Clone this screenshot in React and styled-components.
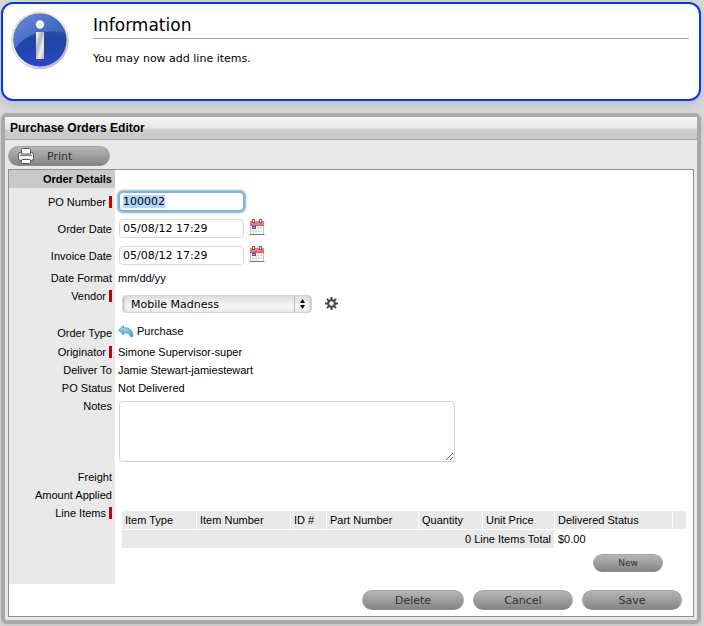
import React, { useEffect, useRef, useState } from "react"
import styled, { createGlobalStyle } from "styled-components"

const GlobalStyle = createGlobalStyle`
  * {
    box-sizing: border-box;
  }
  body {
    margin: 0;
    background: #d9d9d9;
    color: #000;
    font-family: "Liberation Sans", Arial, sans-serif;
    font-size: 11px;
    line-height: 18px;
  }
`

const Page = styled.div`
  display: flex;
  flex-direction: column;
  gap: 12px;
  padding: 2px 3px 2px 1px;
`

const Message = styled.section`
  display: flex;
  gap: 24px;
  min-height: 99px;
  padding: 7px 10px 7px 8px;
  background: #fff;
  border: 2px solid #0037ff;
  border-radius: 12px;
  box-shadow: 0 4px 12px rgba(0, 0, 0, 0.12);
  font-family: "DejaVu Sans", Verdana, sans-serif;
`

const MessageText = styled.div`
  flex: 1;
`

const MessageTitle = styled.h1`
  margin: 0 0 11px;
  padding-top: 1px;
  border-bottom: 1px solid #a0a0a0;
  font-size: 17px;
  font-weight: normal;
  line-height: 26px;
`

const MessageBody = styled.p`
  margin: 0;
  font-size: 11px;
`

const Window = styled.section`
  padding-bottom: 3px;
  background: #e9e9e9;
  border: 4px solid #a8aaa9;
  border-radius: 6px;
  box-shadow: 0 4px 10px rgba(0, 0, 0, 0.1);
`

const WindowTitle = styled.h2`
  margin: 0;
  padding: 0 5px;
  border-bottom: 1px solid #a5a5a5;
  background: linear-gradient(#f6f6f6, #e6e6e6 50%, #cdcdcd 60%, #c9c9c9);
  font-size: 12px;
  line-height: 22px;
`

const Toolbar = styled.div`
  padding: 6px 3px 3px;
`

const PillButton = styled.button`
  display: flex;
  align-items: center;
  justify-content: center;
  width: ${(props) => (props.$small ? "70px" : props.$wide ? "102px" : "100px")};
  height: ${(props) => (props.$small ? "18px" : "20px")};
  padding: 0;
  border: 1px solid #a3a3a3;
  border-bottom-color: #8c8c8c;
  border-radius: 10px;
  background: linear-gradient(#b6b6b6, #858585);
  color: #333;
  font-family: "DejaVu Sans", Verdana, sans-serif;
  font-size: ${(props) => (props.$small ? "9px" : "11px")};
`

const PrintButton = styled(PillButton)`
  justify-content: flex-start;
  gap: 12px;
  padding-left: 8px;
`

const Panel = styled.form`
  margin: 0 3px;
  border: 1px solid #8f8f8f;
  background: #fff;
`

const Row = styled.div`
  display: grid;
  grid-template-columns: 106px minmax(0, 1fr);
  min-height: ${(props) => (props.$tall ? "27px" : "18px")};
`

const Label = styled.label`
  display: flex;
  justify-content: flex-end;
  align-items: ${(props) => (props.$top ? "flex-start" : "center")};
  padding-right: 3px;
  background: #e9e9e9;
`

const Heading = styled.h3`
  margin: 0;
  padding-right: 3px;
  background: #c9c9c9;
  font-size: 11px;
  text-align: right;
`

const Required = styled.span`
  width: 3px;
  height: 12px;
  margin: 3px 0 3px 3px;
  background: #c80000;
`

const Value = styled.div`
  display: flex;
  align-items: center;
  gap: ${(props) => props.$gap || 0}px;
  padding: ${(props) => props.$pad || "0 3px"};
`

const TextInput = styled.input`
  width: 125px;
  height: 19px;
  padding: 0 3px;
  border: 1px solid #d9d9d9;
  border-radius: 4px;
  outline: none;
  background: #fff;
  color: #000;
  font-family: "DejaVu Sans", Verdana, sans-serif;
  font-size: 11px;
  &:focus {
    border-color: #7fb0dc;
    box-shadow: 0 0 0 1px #84b4e0, 0 0 2px 2px #84b4e0;
  }
  &::selection {
    background: #b4d5fe;
    color: #000;
  }
`

const IconButton = styled.button`
  display: flex;
  padding: 0 0 2px;
  border: 0;
  background: none;
`

const SelectBox = styled.div`
  display: grid;
  width: 190px;
  height: 18px;
  align-items: center;
  background: linear-gradient(#dedede, #f5f5f5 60%, #ececec);
  border: 1px solid #d4d4d4;
  border-radius: 4px;
  box-shadow: inset 3px 0 3px -2px #bbb, inset -3px 0 3px -2px #bbb;
`

const Select = styled.select`
  grid-area: 1 / 1;
  width: 100%;
  padding: 0 20px 0 8px;
  border: 0;
  outline: none;
  appearance: none;
  background: none;
  color: #000;
  font-family: "DejaVu Sans", "Lucida Grande", sans-serif;
  font-size: 11px;
`

const SelectArrows = styled.svg`
  grid-area: 1 / 1;
  justify-self: end;
  pointer-events: none;
`

const Notes = styled.textarea`
  display: block;
  width: 336px;
  height: 61px;
  border: 1px solid #d4d4d4;
  border-radius: 4px;
  outline: none;
  font-family: "DejaVu Sans", Verdana, sans-serif;
  font-size: 11px;
`

const LineItems = styled.div`
  padding: 6px 6px 12px;
`

const Table = styled.table`
  width: 100%;
  border-collapse: separate;
  border-spacing: 1px;
  table-layout: fixed;
`

const Th = styled.th`
  padding: 0 3px;
  background: #e9e9e9;
  font-weight: normal;
  text-align: left;
  white-space: nowrap;
`

const Td = styled.td`
  padding: 0 3px;
  background: ${(props) => (props.$total ? "#e9e9e9" : "none")};
  text-align: ${(props) => (props.$total ? "right" : "left")};
`

const NewRow = styled.div`
  display: flex;
  justify-content: flex-end;
  padding: 5px 24px 0 0;
`

const Footer = styled.div`
  display: flex;
  justify-content: flex-end;
  gap: 9px;
  padding: 6px 11px;
`

function InfoIcon() {
  return (
    <svg width="58" height="60" viewBox="0 0 58 60">
      <defs>
        <linearGradient id="rim" x1="0" y1="0" x2="1" y2="1">
          <stop offset="0" stopColor="#d0d0d0" />
          <stop offset="0.5" stopColor="#f2f2f2" />
          <stop offset="1" stopColor="#a4a4a4" />
        </linearGradient>
        <linearGradient id="ball" x1="0" y1="0" x2="0" y2="1">
          <stop offset="0" stopColor="#3a63c4" />
          <stop offset="0.5" stopColor="#2045a0" />
          <stop offset="1" stopColor="#2c46c8" />
        </linearGradient>
        <linearGradient id="gloss" x1="0" y1="0" x2="1" y2="1">
          <stop offset="0" stopColor="#6a8ce0" />
          <stop offset="1" stopColor="#2c50b0" />
        </linearGradient>
        <linearGradient id="stem" x1="0" y1="0" x2="1" y2="1">
          <stop offset="0" stopColor="#fff" />
          <stop offset="0.4" stopColor="#b4b4b4" />
          <stop offset="0.65" stopColor="#ededed" />
          <stop offset="1" stopColor="#b8b8b8" />
        </linearGradient>
      </defs>
      <circle cx="29" cy="29.500" r="28.500" fill="#a9a9a9" />
      <circle cx="29" cy="29" r="28.500" fill="url(#rim)" />
      <circle cx="29" cy="29" r="26.500" fill="url(#ball)" />
      <path d="M4 38 A26.500 26.500 0 1 1 54.500 22 C36 17 14 22 4 38 Z" fill="url(#gloss)" />
      <circle cx="29" cy="13.500" r="4.200" fill="#f5f5f5" />
      <rect x="25" y="21" width="8" height="27" fill="url(#stem)" />
    </svg>
  )
}

function PrinterIcon() {
  return (
    <svg width="18" height="16" viewBox="0 0 18 16">
      <rect x="1.500" y="4.500" width="15" height="8" rx="2" fill="#e8e8e8" stroke="#555" />
      <path d="M4.500 6 V1.500 Q4.500 0.500 5.500 0.500 H12.500 Q13.500 0.500 13.500 1.500 V6 Z" fill="#fff" stroke="#555" />
      <path d="M3 7.500 H15" stroke="#777" />
      <path d="M2 9 H16" stroke="#fff" />
      <rect x="4.500" y="11.500" width="9" height="4" rx="1" fill="#fff" stroke="#555" />
    </svg>
  )
}

function CalendarIcon() {
  return (
    <svg width="16" height="17" viewBox="0 0 16 17">
      <rect x="1.500" y="2.500" width="13" height="13" fill="#fff" stroke="#c4c4c4" />
      <path d="M0.500 15.500 H15.500" stroke="#8a7474" />
      <rect x="1" y="2" width="14" height="5" fill="#f47472" />
      <path d="M1 6.500 H15" stroke="#dd5550" />
      <path d="M4.500 0 V4 M11.500 0 V4" stroke="#a05050" strokeWidth="3" />
      <path d="M4.500 1 V3 M11.500 1 V3" stroke="#fff" />
      <path d="M8 9 H13 M3 12 H13" stroke="#c4dadd" strokeDasharray="2 1" strokeWidth="2" />
      <path d="M3 14 H10" stroke="#c4dadd" strokeDasharray="2 1" />
      <rect x="3.500" y="7.500" width="3" height="2" fill="#a8c0f0" stroke="#3158bd" />
    </svg>
  )
}

function GearIcon() {
  return (
    <svg width="13" height="13" viewBox="0 0 13 13">
      <path
        d="M6.500 0 V13 M0 6.500 H13 M1.900 1.900 L11.100 11.100 M11.100 1.900 L1.900 11.100"
        stroke="#444"
        strokeWidth="2"
      />
      <circle cx="6.500" cy="6.500" r="3.300" fill="#fff" stroke="#444" strokeWidth="2" />
    </svg>
  )
}

function ReplyIcon() {
  return (
    <svg width="16" height="12" viewBox="0 0 16 12">
      <defs>
        <linearGradient id="reply" x1="0" y1="0" x2="0" y2="1">
          <stop offset="0" stopColor="#b4e4f6" />
          <stop offset="1" stopColor="#3a9ad6" />
        </linearGradient>
      </defs>
      <path
        d="M0.600 5 L5.500 0.800 V2.800 C11 2.400 15.200 5 14.800 11.400 H12.500 C12 8.600 9.500 7.600 5.500 7.600 V10 Z"
        fill="url(#reply)"
        stroke="#4aa2d0"
        strokeLinejoin="round"
      />
    </svg>
  )
}

const columns = [
  { name: "Item Type", width: "74px" },
  { name: "Item Number", width: "93px" },
  { name: "ID #", width: "35px" },
  { name: "Part Number", width: "91px" },
  { name: "Quantity", width: "63px" },
  { name: "Unit Price", width: "71px" },
  { name: "Delivered Status", width: "auto" },
  { name: "", width: "13px" },
]

function DateRow({ id, label }) {
  const [date, setDate] = useState("05/08/12 17:29")

  return (
    <Row $tall>
      <Label htmlFor={id}>{label}</Label>
      <Value $gap={5} $pad="0 4px">
        <TextInput
          id={id}
          type="text"
          value={date}
          onChange={(event) => setDate(event.target.value)}
        />
        <IconButton type="button" aria-label={`Pick ${label}`}>
          <CalendarIcon />
        </IconButton>
      </Value>
    </Row>
  )
}

function App() {
  const [poNumber, setPoNumber] = useState("100002")
  const poInput = useRef(null)

  useEffect(() => {
    poInput.current.focus()
    poInput.current.select()
  }, [])

  return (
    <>
      <GlobalStyle />
      <Page>
        <Message>
          <InfoIcon />
          <MessageText>
            <MessageTitle>Information</MessageTitle>
            <MessageBody>You may now add line items.</MessageBody>
          </MessageText>
        </Message>
        <Window>
          <WindowTitle>Purchase Orders Editor</WindowTitle>
          <Toolbar>
            <PrintButton type="button" $wide>
              <PrinterIcon />
              Print
            </PrintButton>
          </Toolbar>
          <Panel onSubmit={(event) => event.preventDefault()}>
            <Row>
              <Heading>Order Details</Heading>
            </Row>
            <Row $tall>
              <Label htmlFor="po-number">
                PO Number
                <Required />
              </Label>
              <Value $pad="0 4px">
                <TextInput
                  id="po-number"
                  ref={poInput}
                  type="text"
                  value={poNumber}
                  onChange={(event) => setPoNumber(event.target.value)}
                />
              </Value>
            </Row>
            <DateRow id="order-date" label="Order Date" />
            <DateRow id="invoice-date" label="Invoice Date" />
            <Row>
              <Label as="div">Date Format</Label>
              <Value>mm/dd/yy</Value>
            </Row>
            <Row>
              <Label htmlFor="vendor" $top>
                Vendor
                <Required />
              </Label>
              <Value $gap={13} $pad="8px 7px 9px">
                <SelectBox>
                  <Select id="vendor">
                    <option>Mobile Madness</option>
                  </Select>
                  <SelectArrows width="17" height="16" viewBox="0 0 17 16">
                    <path d="M0.500 0 V16" stroke="#c0c0c0" />
                    <path d="M6 7 L8.500 3 L11 7 Z M6 9 L8.500 13 L11 9 Z" fill="#000" />
                  </SelectArrows>
                </SelectBox>
                <IconButton type="button" aria-label="Vendor settings">
                  <GearIcon />
                </IconButton>
              </Value>
            </Row>
            <Row>
              <Label as="div">Order Type</Label>
              <Value $gap={3} $pad="0 3px 3px">
                <ReplyIcon />
                Purchase
              </Value>
            </Row>
            <Row>
              <Label as="div">
                Originator
                <Required />
              </Label>
              <Value>Simone Supervisor-super</Value>
            </Row>
            <Row>
              <Label as="div">Deliver To</Label>
              <Value>Jamie Stewart-jamiestewart</Value>
            </Row>
            <Row>
              <Label as="div">PO Status</Label>
              <Value>Not Delivered</Value>
            </Row>
            <Row>
              <Label htmlFor="notes" $top>
                Notes
              </Label>
              <Value $pad="4px 4px 6px">
                <Notes id="notes" />
              </Value>
            </Row>
            <Row>
              <Label as="div">Freight</Label>
            </Row>
            <Row>
              <Label as="div">Amount Applied</Label>
            </Row>
            <Row>
              <Label as="div" $top>
                Line Items
                <Required />
              </Label>
              <LineItems>
                <Table>
                  <colgroup>
                    {columns.map((column) => (
                      <col key={column.name} style={{ width: column.width }} />
                    ))}
                  </colgroup>
                  <thead>
                    <tr>
                      {columns.map((column) => (
                        <Th key={column.name}>{column.name}</Th>
                      ))}
                    </tr>
                  </thead>
                  <tbody>
                    <tr>
                      <Td $total colSpan={6}>
                        0 Line Items Total
                      </Td>
                      <Td colSpan={2}>$0.00</Td>
                    </tr>
                  </tbody>
                </Table>
                <NewRow>
                  <PillButton type="button" $small>
                    New
                  </PillButton>
                </NewRow>
              </LineItems>
            </Row>
            <Footer>
              <PillButton type="button" $wide>
                Delete
              </PillButton>
              <PillButton type="button">Cancel</PillButton>
              <PillButton type="submit">Save</PillButton>
            </Footer>
          </Panel>
        </Window>
      </Page>
    </>
  )
}

export default App
